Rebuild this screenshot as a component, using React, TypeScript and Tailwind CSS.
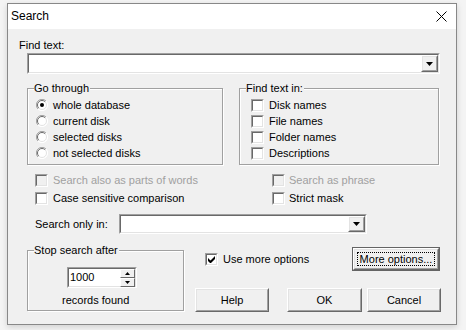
import React from 'react';

const sunkenOuter = 'border border-t-[#a0a0a0] border-l-[#a0a0a0] border-b-white border-r-white';
const sunkenInner = 'border border-t-[#696969] border-l-[#696969] border-b-[#e3e3e3] border-r-[#e3e3e3]';
const raisedOuter = 'border border-t-white border-l-white border-b-[#696969] border-r-[#696969]';
const raisedInner = 'border border-t-[#e3e3e3] border-l-[#e3e3e3] border-b-[#a0a0a0] border-r-[#a0a0a0]';

const DownArrow = () => (
  <svg width="7" height="4" viewBox="0 0 7 4">
    <path d="M0 0h7L3.5 4z" fill="#000" />
  </svg>
);

const Combo = ({ className }: { className: string }) => (
  <div className={`${sunkenOuter} ${className}`}>
    <div className={`${sunkenInner} flex h-full w-full justify-end bg-white`}>
      <div className={`${raisedOuter} h-full w-[17px]`}>
        <div className={`${raisedInner} flex h-full w-full items-center justify-center bg-[#f0f0f0]`}>
          <DownArrow />
        </div>
      </div>
    </div>
  </div>
);

const CheckBox = ({ checked = false, disabled = false }: { checked?: boolean; disabled?: boolean }) => (
  <div className={`${sunkenOuter} h-[13px] w-[13px] shrink-0`}>
    <div className={`${sunkenInner} flex h-full w-full items-center justify-center ${disabled ? 'bg-[#f0f0f0]' : 'bg-white'}`}>
      {checked && (
        <svg width="7" height="7" viewBox="0 0 7 7">
          <path d="M0 2v3l2 2h1l4-4V0L2.5 4.5z" fill="#000" />
        </svg>
      )}
    </div>
  </div>
);

const Radio = ({ checked = false }: { checked?: boolean }) => (
  <svg width="12" height="12" viewBox="0 0 12 12" className="shrink-0">
    <circle cx="6" cy="6" r="5.5" fill="#fff" />
    <path d="M10 2A5.5 5.5 0 0 0 2 10" stroke="#a0a0a0" fill="none" />
    <path d="M9.2 2.8A4.5 4.5 0 0 0 2.8 9.2" stroke="#696969" fill="none" />
    <path d="M2 10A5.5 5.5 0 0 0 10 2" stroke="#fff" fill="none" />
    <path d="M2.8 9.2A4.5 4.5 0 0 0 9.2 2.8" stroke="#e3e3e3" fill="none" />
    {checked && <circle cx="6" cy="6" r="2" fill="#000" />}
  </svg>
);

const Button = ({ label, className, isDefault = false }: { label: string; className: string; isDefault?: boolean }) => (
  <div className={`${isDefault ? 'border border-[#646464]' : ''} ${className}`}>
    <div className={`${raisedOuter} h-full w-full`}>
      <div className={`${raisedInner} flex h-full w-full items-center justify-center bg-[#f0f0f0] ${isDefault ? 'p-[2px]' : ''}`}>
        {isDefault ? (
          <div className="flex h-full w-full items-center justify-center border border-dotted border-black">{label}</div>
        ) : (
          label
        )}
      </div>
    </div>
  </div>
);

const GroupBox = ({ title, className, children }: { title: string; className: string; children?: React.ReactNode }) => (
  <div className={`relative border border-[#a0a0a0] shadow-[1px_1px_0_#fff,inset_1px_1px_0_#fff] ${className}`}>
    <span className="absolute -top-[7px] left-[6px] bg-[#f0f0f0] pr-px leading-[13px]">{title}</span>
    {children}
  </div>
);

const RadioRow = ({ label, checked }: { label: string; checked?: boolean }) => (
  <div className="flex h-[16px] items-center gap-[5px]">
    <Radio checked={checked} />
    <span>{label}</span>
  </div>
);

const CheckRow = ({ label }: { label: string }) => (
  <div className="flex h-[16px] items-center gap-[5px]">
    <CheckBox />
    <span>{label}</span>
  </div>
);

const SpinHalf = ({ up }: { up?: boolean }) => (
  <div className={`${raisedOuter} h-[9px] w-[15px]`}>
    <div className="flex h-full w-full items-center justify-center bg-[#f0f0f0]">
      <svg width="5" height="3" viewBox="0 0 5 3">
        <path d={up ? 'M2.5 0L5 3H0z' : 'M0 0h5L2.5 3z'} fill="#000" />
      </svg>
    </div>
  </div>
);

export default function App() {
  return (
    <div className="h-[330px] w-[466px] bg-[#f4f4f4] pl-[7px] pt-[3px] font-['Liberation_Sans',Arial,sans-serif] text-[11px] leading-[13px] text-black">
      <div className="flex h-[322px] w-[450px] flex-col border border-[#888] shadow-[0_2px_6px_rgba(0,0,0,0.15)]">
        {/* title bar */}
        <div className="flex h-[25px] items-center justify-between bg-white pl-[3px] pr-[9px]">
          <span className="text-[12px]">Search</span>
          <svg width="11" height="11" viewBox="0 0 11 11">
            <path d="M0.5 0.5l10 10M10.5 0.5l-10 10" stroke="#000" strokeWidth="1" />
          </svg>
        </div>

        <div className="flex-1 bg-[#f0f0f0]">
          <div className="ml-[11px] mt-[10px]">Find text:</div>
          <Combo className="ml-[19px] mt-[1px] h-[21px] w-[413px]" />

          <div className="mt-[14px] flex">
            <GroupBox title="Go through" className="ml-[19px] h-[77px] w-[196px] pl-[8px] pt-[8px]">
              <RadioRow label="whole database" checked />
              <RadioRow label="current disk" />
              <RadioRow label="selected disks" />
              <RadioRow label="not selected disks" />
            </GroupBox>
            <GroupBox title="Find text in:" className="ml-[16px] h-[77px] w-[200px] pl-[11px] pt-[8px]">
              <CheckRow label="Disk names" />
              <CheckRow label="File names" />
              <CheckRow label="Folder names" />
              <CheckRow label="Descriptions" />
            </GroupBox>
          </div>

          <div className="mt-[6px] pl-[27px]">
            <div className="flex h-[18px] items-center">
              <div className="flex w-[237px] items-center gap-[5px] text-[#a0a0a0]">
                <CheckBox disabled />
                <span>Search also as parts of words</span>
              </div>
              <div className="flex items-center gap-[4px] text-[#a0a0a0]">
                <CheckBox disabled />
                <span>Search as phrase</span>
              </div>
            </div>
            <div className="flex h-[18px] items-center">
              <div className="flex w-[237px] items-center gap-[5px]">
                <CheckBox />
                <span>Case sensitive comparison</span>
              </div>
              <div className="flex items-center gap-[4px]">
                <CheckBox />
                <span>Strict mask</span>
              </div>
            </div>
          </div>

          <div className="mt-[7px] flex h-[20px] items-center pl-[27px]">
            <span className="w-[84px]">Search only in:</span>
            <Combo className="h-[20px] w-[248px]" />
          </div>

          <div className="flex">
            <GroupBox title="Stop search after" className="ml-[19px] mt-[16px] h-[61px] w-[157px]">
              <div className={`${sunkenOuter} ml-[39px] mt-[16px] h-[21px] w-[70px]`}>
                <div className={`${sunkenInner} flex h-full w-full items-center bg-white pl-[1px]`}>
                  <span className="flex-1">1000</span>
                  <div className="flex flex-col">
                    <SpinHalf up />
                    <SpinHalf />
                  </div>
                </div>
              </div>
              <div className="ml-[34px] mt-[6px]">records found</div>
            </GroupBox>

            <div className="ml-[11px] mt-[13px] w-[246px]">
              <div className="flex h-[24px] items-center">
                <div className="ml-[10px] flex items-center gap-[5px]">
                  <CheckBox checked />
                  <span>Use more options</span>
                </div>
                <Button label="More options..." isDefault className="ml-auto mr-px h-[24px] w-[88px]" />
              </div>
              <div className="mt-[17px] flex">
                <Button label="Help" className="h-[24px] w-[74px]" />
                <Button label="OK" className="ml-[18px] h-[24px] w-[75px]" />
                <Button label="Cancel" className="ml-[5px] h-[24px] w-[74px]" />
              </div>
            </div>
          </div>
        </div>
      </div>
    </div>
  );
}
